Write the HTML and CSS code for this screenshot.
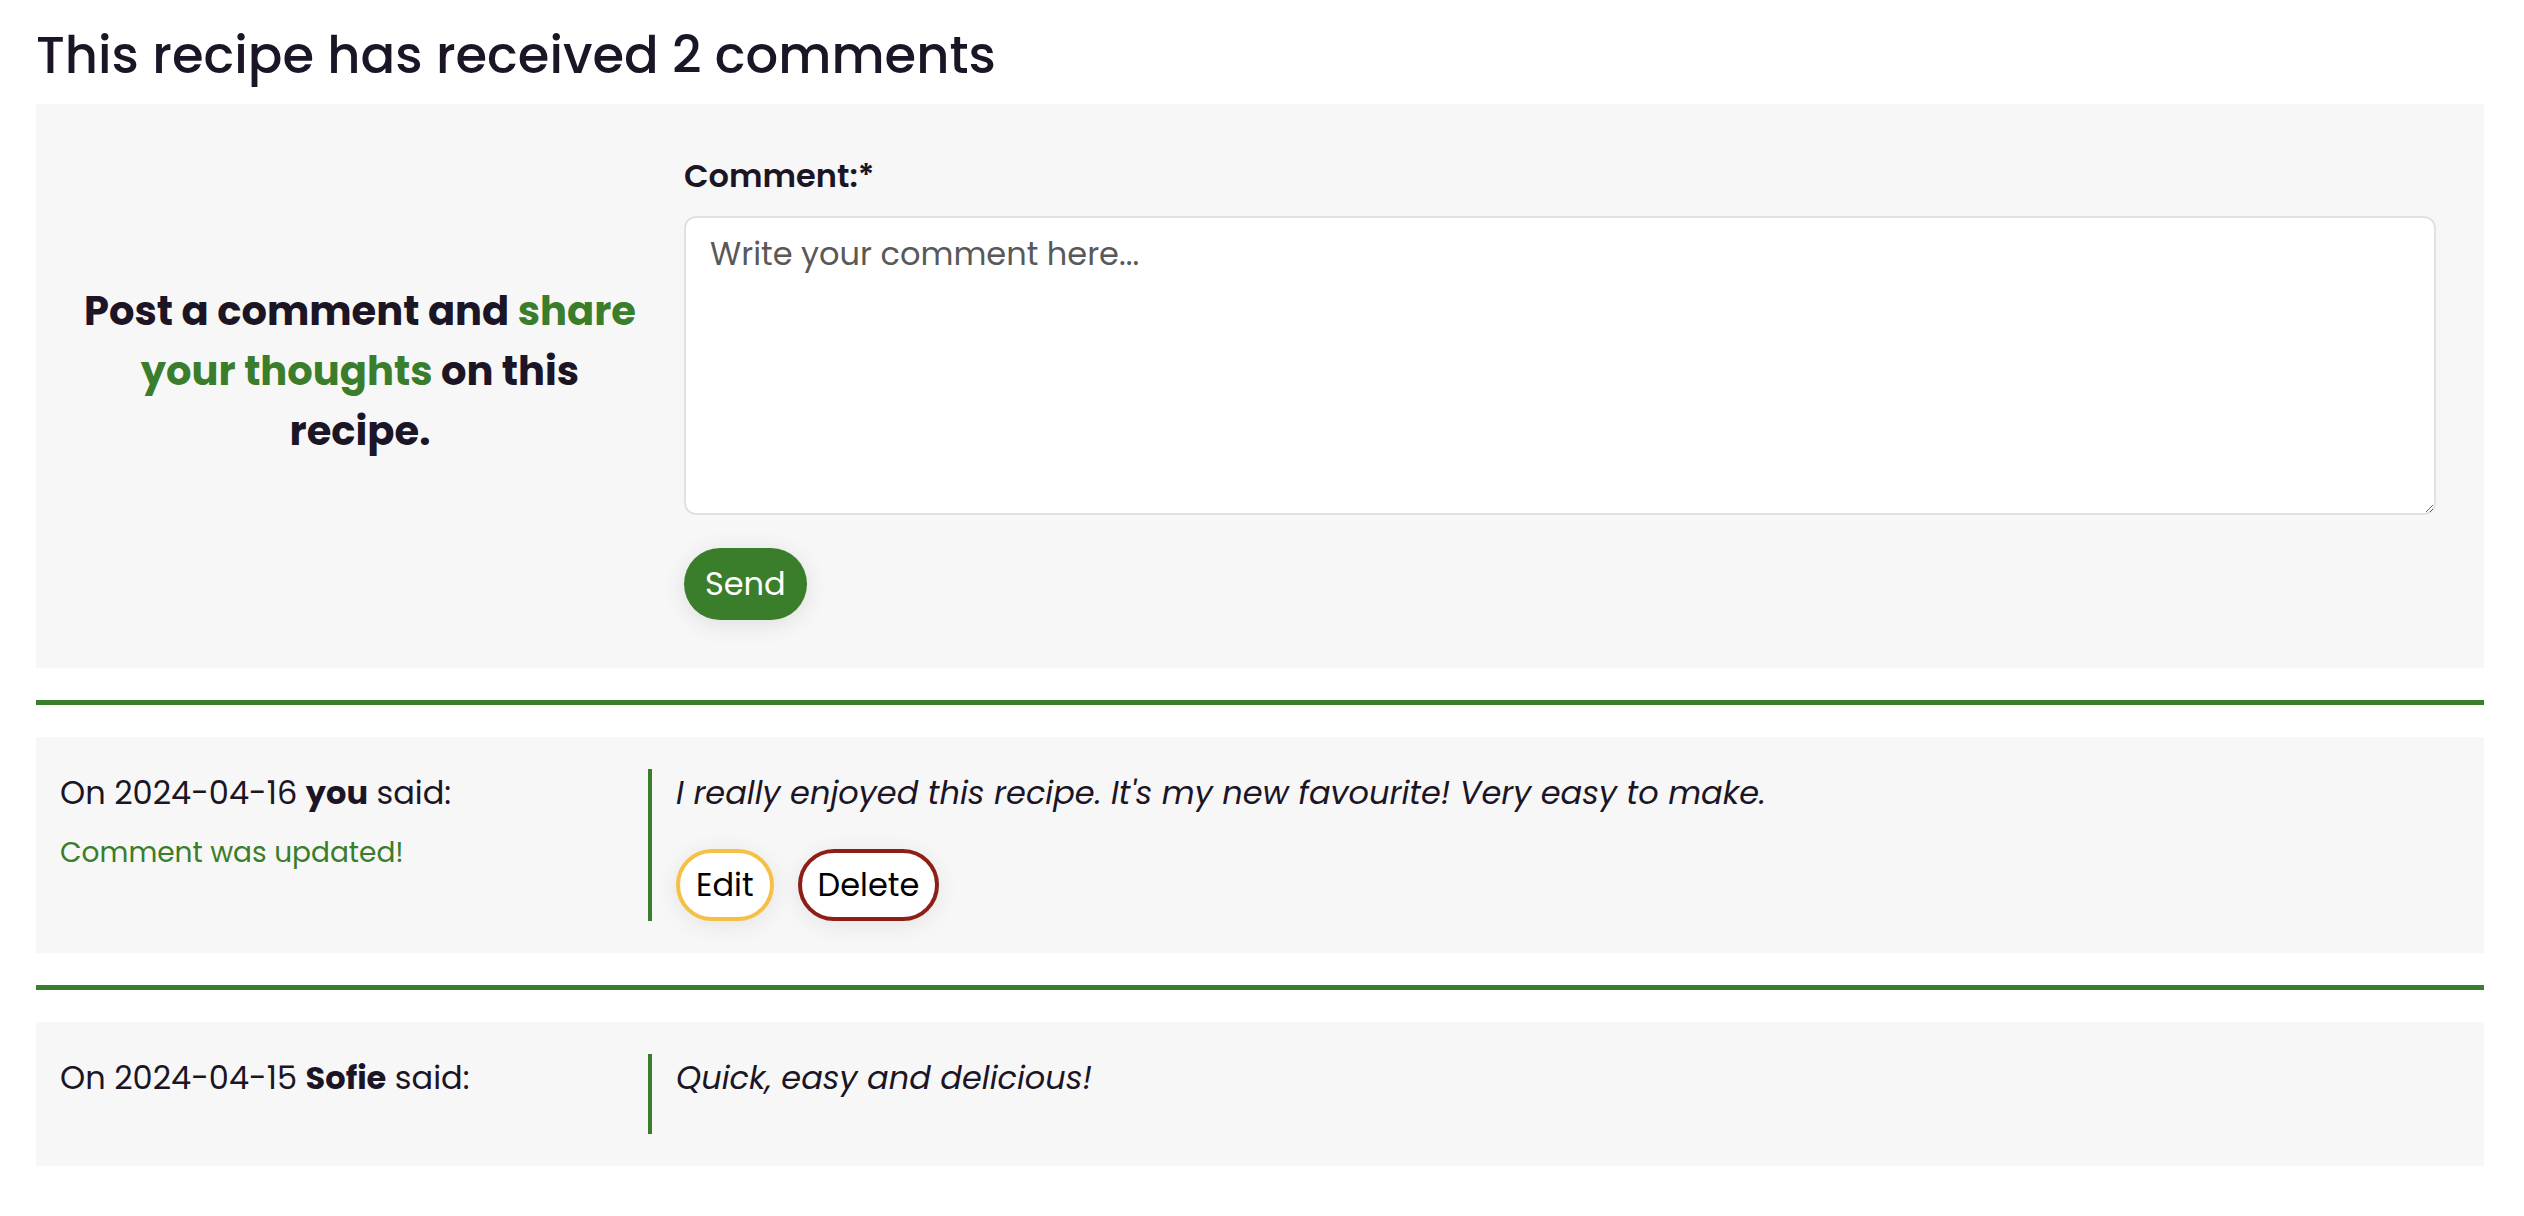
FILE: index.html
```html
<!DOCTYPE html>
<html lang="en">
<head>
<meta charset="utf-8">
<title>Comments</title>
<link rel="stylesheet" href="styles.css">
</head>
<body>
<main class="page">
  <h2 class="title">This recipe has received 2 comments</h2>
  <section class="form-panel">
    <div class="intro">
      <h3 class="intro-text">Post a comment and <span class="accent">share<br>your thoughts</span> on this<br>recipe.</h3>
    </div>
    <form class="form">
      <label class="label" for="comment">Comment:*</label>
      <textarea id="comment" class="textarea" placeholder="Write your comment here..."></textarea>
      <button type="button" class="btn btn-send">Send</button>
    </form>
  </section>
  <hr class="divider">
  <article class="comment">
    <div class="meta">
      <p class="meta-line">On 2024-04-16 <strong>you</strong> said:</p>
      <p class="notice">Comment was updated!</p>
    </div>
    <div class="body">
      <p class="text">I really enjoyed this recipe. It's my new favourite! Very easy to make.</p>
      <div class="actions">
        <button type="button" class="btn btn-outline btn-edit">Edit</button>
        <button type="button" class="btn btn-outline btn-delete">Delete</button>
      </div>
    </div>
  </article>
  <hr class="divider">
  <article class="comment">
    <div class="meta">
      <p class="meta-line">On 2024-04-15 <strong>Sofie</strong> said:</p>
    </div>
    <div class="body">
      <p class="text">Quick, easy and delicious!</p>
    </div>
  </article>
</main>
</body>
</html>
```

FILE: styles.css
```css
html, body {
  margin: 0;
  padding: 0;
  background: #ffffff;
}

body {
  color: #1b1525;
  font-family: "Poppins", "Inter", "Open Sans", sans-serif;
}

.page {
  padding: 25px 40px 40px 36px;
}

.title {
  font-size: 51.2px;
  font-weight: 500;
  line-height: 1.2;
  margin: 0 0 18px;
}

.form-panel {
  background: #f7f7f7;
  padding: 48px;
  display: grid;
  grid-template-columns: 552px 1fr;
  gap: 48px;
}

.intro {
  display: flex;
  align-items: center;
  justify-content: center;
  text-align: center;
}

.intro-text {
  font-size: 40px;
  font-weight: 700;
  line-height: 1.5;
  margin: 0 0 30px;
}

.accent {
  color: #3a7d2a;
}

.form {
  display: flex;
  flex-direction: column;
  align-items: flex-start;
  margin: 0;
}

.label {
  font-size: 32px;
  font-weight: 600;
  line-height: 1.5;
  margin-bottom: 16px;
}

.textarea {
  width: 100%;
  box-sizing: border-box;
  height: 299px;
  border: 2px solid #dee2e6;
  border-radius: 12px;
  padding: 12px 24px;
  font-family: inherit;
  font-size: 32px;
  line-height: 1.5;
  color: #1b1525;
  background: #ffffff;
  margin: 0 0 33px;
  resize: vertical;
}

.textarea::placeholder {
  color: #595959;
  opacity: 1;
}

.btn {
  font-family: inherit;
  font-size: 32px;
  line-height: 1.5;
  border-radius: 999px;
  cursor: pointer;
  margin: 0;
}

.btn-send {
  background: #3a7d2a;
  color: #ffffff;
  border: 0;
  padding: 12px 21px;
  box-shadow: 0 4px 24px rgba(0, 0, 0, 0.1);
}

.divider {
  border: 0;
  height: 5px;
  background: #3a7d2a;
  margin: 32px 0;
}

.comment {
  background: #f7f7f7;
  padding: 32px 24px;
  display: grid;
  grid-template-columns: 588px 1fr;
}

.meta p {
  margin: 0;
  font-size: 32px;
  line-height: 1.5;
}

.meta strong {
  font-weight: 700;
}

.meta .notice {
  font-size: 28px;
  color: #3a7d2a;
  margin-top: 15px;
}

.body {
  border-left: 4px solid #3a7d2a;
  padding-left: 24px;
}

.text {
  font-style: italic;
  font-size: 32px;
  line-height: 1.5;
  margin: 0 0 32px;
}

.actions {
  display: flex;
  gap: 24px;
}

.btn-outline {
  background: #ffffff;
  color: #000000;
  border: 4px solid;
  padding: 8px 16px;
  box-shadow: 0 4px 24px rgba(0, 0, 0, 0.08);
}

.btn-edit {
  border-color: #f4c145;
}

.btn-delete {
  border-color: #8e1f16;
}
```
